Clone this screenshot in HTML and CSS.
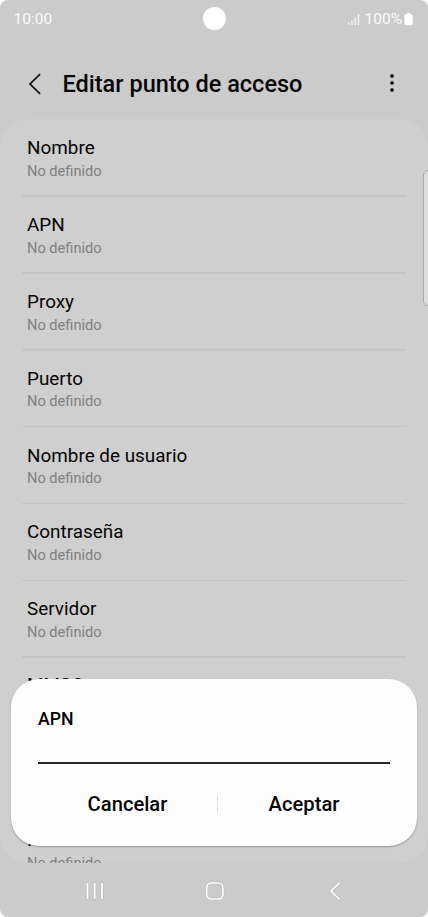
FILE: index.html
```html
<!DOCTYPE html>
<html lang="es">
<head>
<meta charset="UTF-8">
<meta name="viewport" content="width=device-width, initial-scale=1.0">
<title>Editar punto de acceso</title>
<link rel="stylesheet" href="styles.css">
</head>
<body>
  <div class="phone">
    <div class="statusbar">
      <span class="time">10:00</span>
      <div class="status-right">
        <svg class="signal" width="12" height="12" viewBox="0 0 12 12">
          <path d="M1 9.5V12M4 7.5V12M7.2 4.5V12M10.5 1V12" stroke="#fafafa" stroke-width="1.2"/>
        </svg>
        <span class="percent">100%</span>
        <svg class="battery" width="9" height="13" viewBox="0 0 9 13">
          <path d="M2.5 1.2Q2.5 0 4.5 0T6.5 1.2H7.2Q8.7 1.2 8.7 2.7V10.7Q8.7 12.3 7.2 12.3H1.9Q.4 12.3 .4 10.7V2.7Q.4 1.2 1.9 1.2Z" fill="#fff"/>
        </svg>
      </div>
      <div class="camera"></div>
    </div>

    <header class="header">
      <svg class="back" width="14" height="24" viewBox="0 0 14 24">
        <path d="M12.1 2.2L2 12L12.1 21.8" fill="none" stroke="#111" stroke-width="1.7"/>
      </svg>
      <h1>Editar punto de acceso</h1>
      <svg class="more" width="6" height="20" viewBox="0 0 6 20">
        <circle cx="3" cy="3" r="1.8"/>
        <circle cx="3" cy="10" r="1.8"/>
        <circle cx="3" cy="17" r="1.8"/>
      </svg>
    </header>

    <ul class="list">
      <li><h2>Nombre</h2><p>No definido</p></li>
      <li><h2>APN</h2><p>No definido</p></li>
      <li><h2>Proxy</h2><p>No definido</p></li>
      <li><h2>Puerto</h2><p>No definido</p></li>
      <li><h2>Nombre de usuario</h2><p>No definido</p></li>
      <li><h2>Contraseña</h2><p>No definido</p></li>
      <li><h2>Servidor</h2><p>No definido</p></li>
      <li class="mmsc"><h2>MMSC</h2><p>No definido</p></li>
      <li><h2>Proxy MMS</h2><p>No definido</p></li>
      <li class="last"><h2>Puerto MMS</h2><p>No definido</p></li>
    </ul>

    <div class="navbar">
      <svg width="20" height="20" viewBox="0 0 20 20">
        <path d="M2.5 1.5V18.5M9.7 1.5V18.5M17 1.5V18.5" stroke="#b9b9b9" stroke-width="3"/>
        <path d="M2.5 2V18M9.7 2V18M17 2V18" stroke="#fff" stroke-width="1.8"/>
      </svg>
      <svg width="20" height="20" viewBox="0 0 20 20">
        <rect x="1.7" y="2" width="16.2" height="16" rx="4.6" fill="none" stroke="#b9b9b9" stroke-width="2.8"/>
        <rect x="1.7" y="2" width="16.2" height="16" rx="4.6" fill="none" stroke="#fff" stroke-width="1.7"/>
      </svg>
      <svg width="20" height="20" viewBox="0 0 20 20">
        <path d="M14.6 1.7L6 10L14.6 18.3" fill="none" stroke="#b9b9b9" stroke-width="2.8"/>
        <path d="M14.6 1.7L6 10L14.6 18.3" fill="none" stroke="#fff" stroke-width="1.7"/>
      </svg>
    </div>

    <div class="edge-handle"></div>

    <div class="dialog">
      <h3>APN</h3>
      <div class="field"></div>
      <div class="buttons">
        <button type="button">Cancelar</button>
        <span class="separator"></span>
        <button type="button">Aceptar</button>
      </div>
    </div>
  </div>
</body>
</html>
```
FILE: styles.css
```css
* {
  box-sizing: border-box;
}
body {
  margin: 0;
  background-color: #fff;
  font-family: Roboto, sans-serif;
  color: #050505;
}
h1, h2, h3, p, ul {
  margin: 0;
  padding: 0;
}
svg {
  display: block;
}
.phone {
  position: relative;
  width: 428px;
  height: 917px;
  overflow: hidden;
  border-radius: 8px;
  background-color: #cbcbcb;
  display: flex;
  flex-direction: column;
}

/* status bar */
.statusbar {
  position: relative;
  height: 48px;
  padding: 9px 15px 0 13.5px;
  display: flex;
  justify-content: space-between;
  align-items: flex-start;
  color: #fafafa;
  font-size: 15.5px;
  line-height: 20px;
}
.status-right {
  display: flex;
  align-items: center;
}
.signal {
  margin-right: 4.5px;
}
.battery {
  margin-left: 2px;
}
.camera {
  position: absolute;
  left: 202.5px;
  top: 7px;
  width: 23px;
  height: 23px;
  border-radius: 50%;
  background-color: #fff;
}

/* title */
.header {
  height: 71px;
  padding: 0 33px 0 28px;
  display: flex;
  align-items: center;
}
.header h1 {
  flex: 1;
  margin-left: 20.5px;
  padding-top: 1px;
  font-size: 23.5px;
  font-weight: 500;
  line-height: 30px;
}
.more {
  margin-bottom: 1px;
}

/* settings list */
.list {
  height: 744px;
  overflow: hidden;
  list-style: none;
  padding-top: 1px;
  border-radius: 28px;
  background-color: #cfcfcf;
}
.list li {
  height: 76.85px;
  margin: 0 22px;
  padding: 16.2px 5px 0;
  background: linear-gradient(#c3c3c3, #c3c3c3) left bottom / 100% 1.5px no-repeat;
}
.list h2 {
  font-size: 18.9px;
  font-weight: 400;
  line-height: 24px;
}
.list p {
  margin-top: 0.7px;
  color: #808080;
  font-size: 14.6px;
  line-height: 20px;
}
.list .mmsc {
  padding-top: 15px;
}
.list .last {
  padding-top: 16.6px;
}

/* system navigation */
.navbar {
  height: 54px;
  padding: 2px 83px 0 85px;
  display: flex;
  justify-content: space-between;
  align-items: center;
}

.edge-handle {
  position: absolute;
  left: 423px;
  top: 170px;
  width: 12px;
  height: 136px;
  border: 1px solid #aaa;
  border-radius: 5px;
  background-color: #dcdcdc;
}

/* dialog */
.dialog {
  position: absolute;
  left: 11px;
  top: 679px;
  width: 406px;
  height: 167px;
  padding: 28px 27px 0;
  border-radius: 28px;
  background-color: #fdfdfd;
  box-shadow: 0 1px 2px rgba(0, 0, 0, 0.28);
}
.dialog h3 {
  font-size: 17.7px;
  font-weight: 500;
  line-height: 24px;
}
.field {
  height: 33px;
  border-bottom: 2px solid #2b282b;
}
.buttons {
  margin-top: 20px;
  display: grid;
  grid-template-columns: 179px 1px 172px;
  align-items: center;
}
.buttons button {
  padding: 0;
  border: none;
  background: none;
  color: #050505;
  font-family: inherit;
  font-size: 20.2px;
  font-weight: 500;
  line-height: 40px;
}
.separator {
  height: 18px;
  width: 1px;
  background-color: #e2e2e2;
}
```
